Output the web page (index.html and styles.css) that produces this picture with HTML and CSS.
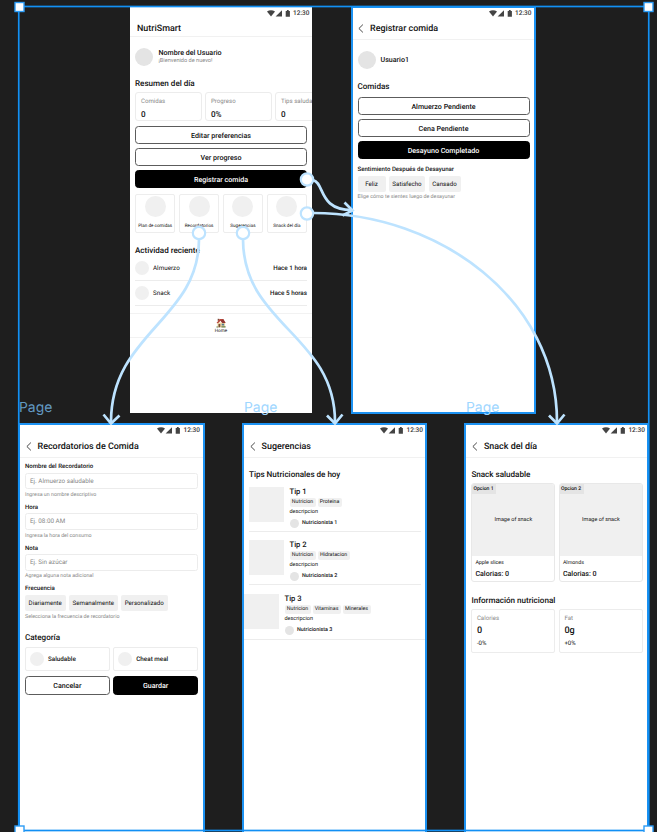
FILE: index.html
```html
<!DOCTYPE html>
<html lang="es">
<head>
<meta charset="utf-8">
<title>NutriSmart</title>
<link rel="stylesheet" href="styles.css">
</head>
<body>
<svg class="defs" width="0" height="0" aria-hidden="true">
  <defs>
    <symbol id="status" viewBox="0 0 24 7">
      <path d="M0 1.500C2.400-.3 5.600-.3 8 1.500L4 6.600z"/>
      <path d="M15 .2v6.400H8.600z"/>
      <path d="M18.700.9h1.200V.1h1.800v.8h1.200v5.800h-4.200z"/>
    </symbol>
    <symbol id="back" viewBox="0 0 6 9">
      <path d="M4.900.6.9 4.500l4 3.900" fill="none" stroke="#333" stroke-width=".9"/>
    </symbol>
  </defs>
</svg>
<main class="canvas">

  <section class="board home">
    <div class="status"><svg><use href="#status"/></svg><span>12:30</span></div>
    <header class="bar"><h1>NutriSmart</h1></header>
    <div class="user"><i class="dot"></i><div><b>Nombre del Usuario</b><small>¡Bienvenido de nuevo!</small></div></div>
    <h2>Resumen del día</h2>
    <div class="stats">
      <div class="stat"><span>Comidas</span><b>0</b></div>
      <div class="stat"><span>Progreso</span><b>0%</b></div>
      <div class="stat"><span>Tips saludables</span><b>0</b></div>
    </div>
    <div class="buttons">
      <div class="btn">Editar preferencias</div>
      <div class="btn">Ver progreso</div>
      <div class="btn dark">Registrar comida</div>
    </div>
    <div class="tiles">
      <div class="tile"><i></i><span>Plan de comidas</span></div>
      <div class="tile"><i></i><span>Recordatorios</span></div>
      <div class="tile"><i></i><span>Sugerencias</span></div>
      <div class="tile"><i></i><span>Snack del día</span></div>
    </div>
    <h2 class="recent">Actividad reciente</h2>
    <div class="activity"><i></i><span>Almuerzo</span><b>Hace 1 hora</b></div>
    <div class="activity"><i></i><span>Snack</span><b>Hace 5 horas</b></div>
    <nav class="nav">
      <svg viewBox="0 0 10 10" width="10" height="10">
        <path d="M1.500 4.500h7.600v4.800H1.500z" fill="#efd9a5"/>
        <path d="M1.700.8h1.600v2H1.700z" fill="#7b4a3b"/>
        <path d="M.5 4.900 3.700 1h3.600l2.400 3.900H6.200L4.600 2.800 2 5.300z" fill="#b8473c"/>
        <path d="M4.600 2.800 6.700 5h2.700L7.300 1.200z" fill="#8e3935"/>
        <path d="M2.500 6h1.800v3.300H2.500z" fill="#764c37"/>
        <path d="M5.700 5.700h2.400v1.800H5.700z" fill="#527b91"/>
        <path d="M.4 8.400h1.800v1.200H.4zm5-.1h4.200v1.300H5.400z" fill="#68804c"/>
      </svg>
      <span>Home</span>
    </nav>
  </section>

  <section class="board meal outlined">
    <div class="status"><svg><use href="#status"/></svg><span>12:30</span></div>
    <header class="bar"><svg class="back"><use href="#back"/></svg><h1>Registrar comida</h1></header>
    <div class="user"><i class="dot"></i><div><b>Usuario1</b></div></div>
    <h2>Comidas</h2>
    <div class="buttons">
      <div class="btn">Almuerzo Pendiente</div>
      <div class="btn">Cena Pendiente</div>
      <div class="btn dark">Desayuno Completado</div>
    </div>
    <div class="field">
      <label>Sentimiento Después de Desayunar</label>
      <div class="chips"><span class="w28">Feliz</span><span class="w36">Satisfecho</span><span class="w32">Cansado</span></div>
      <small>Elige cómo te sientes luego de desayunar</small>
    </div>
  </section>

  <span class="page-label p1">Page</span>
  <span class="page-label p2">Page</span>
  <span class="page-label p3">Page</span>

  <section class="board remind outlined">
    <div class="status"><svg><use href="#status"/></svg><span>12:30</span></div>
    <header class="bar"><svg class="back"><use href="#back"/></svg><h1>Recordatorios de Comida</h1></header>
    <div class="field"><label>Nombre del Recordatorio</label><div class="input">Ej. Almuerzo saludable</div><small>Ingresa un nombre descriptivo</small></div>
    <div class="field"><label>Hora</label><div class="input">Ej. 08:00 AM</div><small>Ingresa la hora del consumo</small></div>
    <div class="field"><label>Nota</label><div class="input">Ej. Sin azúcar</div><small>Agrega alguna nota adicional</small></div>
    <div class="field"><label>Frecuencia</label>
      <div class="chips"><span class="w40">Diariamente</span><span class="w49">Semanalmente</span><span class="w47">Personalizado</span></div>
      <small>Selecciona la frecuencia de recordatorio</small></div>
    <h2>Categoría</h2>
    <div class="pair options"><div class="option"><i></i>Saludable</div><div class="option"><i></i>Cheat meal</div></div>
    <div class="pair"><div class="btn">Cancelar</div><div class="btn dark">Guardar</div></div>
  </section>

  <section class="board tips outlined">
    <div class="status"><svg><use href="#status"/></svg><span>12:30</span></div>
    <header class="bar"><svg class="back"><use href="#back"/></svg><h1>Sugerencias</h1></header>
    <h2>Tips Nutricionales de hoy</h2>
    <article class="tip"><i class="thumb"></i><div><h3>Tip 1</h3><div class="tags"><span class="w26">Nutricion</span><span class="w24">Proteina</span></div><p>descripcion</p><div class="author"><i></i>Nutricionista 1</div></div></article>
    <article class="tip"><i class="thumb"></i><div><h3>Tip 2</h3><div class="tags"><span class="w26">Nutricion</span><span class="w32">Hidratacion</span></div><p>descripcion</p><div class="author"><i></i>Nutricionista 2</div></div></article>
    <article class="tip wide"><i class="thumb"></i><div><h3>Tip 3</h3><div class="tags"><span class="w26">Nutricion</span><span class="w28">Vitaminas</span><span class="w28">Minerales</span></div><p>descripcion</p><div class="author"><i></i>Nutricionista 3</div></div></article>
  </section>

  <section class="board snack outlined">
    <div class="status"><svg><use href="#status"/></svg><span>12:30</span></div>
    <header class="bar"><svg class="back"><use href="#back"/></svg><h1>Snack del día</h1></header>
    <h2>Snack saludable</h2>
    <div class="pair">
      <div class="product"><div class="photo"><em>Opcion 1</em><span>Image of snack</span></div><small>Apple slices</small><b>Calorias: 0</b></div>
      <div class="product"><div class="photo"><em>Opcion 2</em><span>Image of snack</span></div><small>Almonds</small><b>Calorias: 0</b></div>
    </div>
    <h2 class="info">Información nutricional</h2>
    <div class="pair">
      <div class="fact"><span>Calories</span><b>0</b><small>-0%</small></div>
      <div class="fact"><span>Fat</span><b>0g</b><small>+0%</small></div>
    </div>
  </section>

  <svg class="overlay" width="657" height="832" viewBox="0 0 657 832">
    <rect x="18.750" y="6.500" width="630" height="824" fill="none" stroke="#1290f4" stroke-width="1.700"/>
    <g fill="#fff" stroke="#2d9cf5" stroke-width="1.400">
      <rect x="15" y="2.500" width="9" height="9"/><rect x="644" y="2.500" width="9" height="9"/>
      <rect x="15" y="826" width="9" height="9"/><rect x="644" y="826" width="9" height="9"/>
    </g>
    <g fill="none" stroke="#bde3ff" stroke-width="2.700">
      <path d="M199 239C199 320 111 333 111 422"/>
      <path d="M243 239C243 325 335 335 335 422"/>
      <path d="M313 180C325 183 318 210 352 210"/>
      <path d="M313 213C440 213 557 300 557 422"/>
      <path d="M103.500 414.500 111 423.500 119.500 415.500M327 415.500 335 423.500 342.500 414.500M549 415.500 557 423.500 564.500 414.500M344.500 202.500 352.500 210.500 342.500 215.500"/>
    </g>
    <g fill="#fff" stroke="#bde3ff" stroke-width="2.200">
      <circle cx="307" cy="179.500" r="6.200"/><circle cx="307" cy="213.500" r="6.200"/>
      <circle cx="199" cy="233" r="6.200"/><circle cx="243" cy="233" r="6.200"/>
    </g>
  </svg>
</main>
</body>
</html>
```
FILE: styles.css
```css
* { box-sizing: border-box; }
body { margin: 0; background: #1e1e1e; font-family: Roboto, "Liberation Sans", sans-serif; color: #111; text-rendering: geometricPrecision; }
h1, h2, h3, p { margin: 0; font-weight: 500; }
i, em { font-style: normal; display: block; flex: none; }
b, label { font-weight: 500; }
.defs { position: absolute; }
.canvas { position: relative; width: 657px; height: 832px; overflow: hidden; }

/* artboards on the canvas */
.board { position: absolute; background: #fff; overflow: hidden; white-space: nowrap; padding: 0 5px; }
.outlined::after { content: ""; position: absolute; inset: 0; border: 2px solid #1c92f2; }
.home { left: 130px; top: 7px; width: 182px; height: 405.500px; }
.meal { left: 351px; top: 6px; width: 184.500px; height: 407.500px; padding: 0 6px 0 6.500px; }
.remind { left: 18px; top: 423.400px; width: 187px; height: 420px; padding: 0 7px; }
.tips { left: 242px; top: 423.400px; width: 185px; height: 420px; padding: 0 6px 0 7px; }
.snack { left: 464.400px; top: 423.400px; width: 185px; height: 420px; padding: 0 6.500px 0 7px; }
.overlay { position: absolute; left: 0; top: 0; }
.page-label { position: absolute; top: 400px; font: 13.900px/17px Inter, sans-serif; color: #9fd7ff; }
.p1 { left: 19px; color: #6299c2; }
.p2 { left: 244px; }
.p3 { left: 466px; }

.status { display: flex; justify-content: flex-end; align-items: center; height: 12px; font-size: 6.500px; font-weight: 500; color: #333; gap: 2.500px; margin-right: -2.500px; }
.status svg { width: 24px; height: 7px; fill: #444; }
.outlined .status { height: 14px; margin-right: -2px; }
.bar { display: flex; align-items: center; height: 17.500px; margin: 0 -7px; border-bottom: 1px solid #f1f1f1; }
.home .bar { height: 17.500px; padding: 3px 0 0 9px; }
.outlined .bar { height: 20.500px; padding: 0 0 1px 8px; }
.meal .bar { height: 20px; padding: 0 0 2px 7px; }
.back { width: 6px; height: 9px; margin-right: 5.500px; }
.meal .back { margin-right: 6.500px; }
h1 { font-size: 8.950px; line-height: 12px; }
h2 { font-size: 8.100px; line-height: 10px; letter-spacing: -.02px; }

.user { display: flex; align-items: center; height: 18px; margin-top: 11px; gap: 5.500px; }
.meal .user { margin-top: 10.500px; gap: 5px; }
.dot { width: 18px; height: 18px; border-radius: 50%; background: #e4e4e4; }
.user b { display: block; font-size: 7.100px; line-height: 9px; }
.user > div { padding-top: 1px; }
.meal .user > div { padding-top: 0; }
.user small { display: block; font-size: 5.600px; line-height: 9px; color: #888; }
.home .user > div { padding-top: .5px; }
.home h2 { margin-top: 12.700px; }
.meal h2 { margin-top: 12.500px; }

.stats { display: flex; gap: 3.500px; margin-top: 4.300px; height: 29px; }
.stat { flex: none; width: 66.500px; border: 1px solid #ececec; border-radius: 3px; padding: 5px 0 0 5px; }
.stat span, .stat b { display: block; }
.stat span { font-size: 6.100px; line-height: 8px; color: #888; }
.stat b { font-size: 8.100px; line-height: 10px; margin-top: 3px; }

.buttons { display: grid; gap: 3.500px; margin-top: 4.500px; }
.meal .buttons { margin-top: 5.500px; }
.btn { height: 18.500px; border: 1px solid #5c5c5c; border-radius: 3.500px; font-size: 7.100px; font-weight: 500; line-height: 17px; text-align: center; }
.dark { background: #000; border-color: #000; color: #fff; }

.tiles { display: grid; grid-template-columns: repeat(4, 1fr); gap: 3.500px; margin-top: 5.500px; }
.tile { display: flex; flex-direction: column; align-items: center; height: 39px; padding-top: 1px; border: 1px solid #ededed; border-radius: 2px; }
.tile i { width: 21px; height: 21px; border-radius: 50%; background: #f0f0f0; }
.tile span { font-size: 4.600px; line-height: 6px; margin-top: 6.700px; }
.home .recent { margin: 12.500px 0 1px; }
.activity { display: flex; align-items: center; height: 24.700px; border-bottom: 1px solid #ececec; font-size: 6.300px; }
.activity i { width: 14px; height: 14px; border-radius: 50%; background: #f0f0f0; margin-right: 4px; }
.activity b { margin-left: auto; }
.nav { display: flex; flex-direction: column; align-items: center; height: 24.500px; margin: 7.500px -5px 0; padding-top: 3.500px; border: solid #f2f2f2; border-width: 1px 0; font-size: 4.600px; line-height: 6px; }
.nav svg { margin-bottom: 1.500px; }

.field { display: grid; margin-bottom: 5px; }
.meal .field { margin-top: 7px; }
.field label { font-size: 6.100px; line-height: 8px; }
.field small { font-size: 5.300px; line-height: 7px; color: #888; margin-top: 2.800px; }
.remind .field { height: 40.700px; margin: 0; padding-top: 5.400px; align-content: start; }
.input { height: 16.500px; margin-top: 1.400px; border: 1px solid #ececec; border-radius: 2.500px; padding-left: 4px; font-size: 6.300px; line-height: 15.500px; color: #888; }
.chips { display: flex; gap: 3.500px; height: 15.500px; margin-top: 2px; }
.chips span, .tags span { background: #f0f0f0; border-radius: 2px; text-align: center; flex: none; }
.chips span { font-size: 6.200px; line-height: 16px; }
.w24 { width: 24px; } .w26 { width: 26px; } .w28 { width: 28px; } .w32 { width: 32px; }
.w36 { width: 36px; } .w40 { width: 40.500px; } .w47 { width: 46.500px; } .w49 { width: 48.500px; }
.remind h2 { margin-top: 11.500px; }
.pair { display: grid; grid-template-columns: 1fr 1fr; gap: 3.500px; }
.options { margin: 4.500px 0 5px; }
.option { display: flex; align-items: center; height: 24.500px; border: 1px solid #ececec; border-radius: 2px; padding-left: 4px; font-size: 6.300px; font-weight: 500; }
.option i { width: 14px; height: 14px; border-radius: 50%; background: #f0f0f0; margin-right: 4px; }

.tips h2, .snack h2 { margin-top: 11.300px; }
.tip { display: flex; gap: 5.500px; height: 53px; padding-top: 7.800px; border-bottom: 1px solid #ececec; }
.tip.wide { margin: 0 -6.500px; padding: 8.800px 0 0 1.500px; height: 55px; }
.thumb { width: 35px; height: 35px; background: #f0f0f0; }
.tip h3 { font-size: 7.600px; line-height: 9px; }
.tags { display: flex; gap: 2px; height: 9px; margin-top: 1.700px; }
.tags span { font-size: 5.300px; line-height: 9.500px; }
.tip p { font-size: 5.500px; line-height: 7px; margin-top: 2.500px; font-weight: 400; }
.author { display: flex; align-items: center; height: 9px; margin-top: 2.500px; font-size: 5.400px; font-weight: 500; gap: 3.500px; }
.author i { width: 9px; height: 9px; border-radius: 50%; background: #e4e4e4; }

.product { height: 98.500px; margin-top: 4px; border: 1px solid #e8e8e8; border-radius: 3px; overflow: hidden; }
.photo { position: relative; height: 72px; background: #f0f0f0; display: grid; place-items: center; font-size: 5.500px; }
.photo em { position: absolute; left: 0; top: 0; width: 24px; height: 10px; padding-left: 1px; font-size: 5.100px; line-height: 10px; font-weight: 500; background: #e4e4e4; }
.product small, .product b { display: block; padding-left: 3px; }
.product small { font-size: 5.300px; line-height: 7px; margin-top: 4px; }
.product b { font-size: 7.100px; line-height: 9px; margin-top: 2px; }
.snack .info { margin: 13.500px 0 4px; }
.fact { height: 43.500px; border: 1px solid #ececec; border-radius: 2px; padding: 4.500px 0 0 4.500px; }
.fact > * { display: block; }
.fact span { font-size: 6.100px; line-height: 8px; color: #888; }
.fact b { font-size: 9.100px; line-height: 11px; margin-top: 3.500px; }
.fact small { font-size: 6.100px; line-height: 8px; margin-top: 3px; }
```
